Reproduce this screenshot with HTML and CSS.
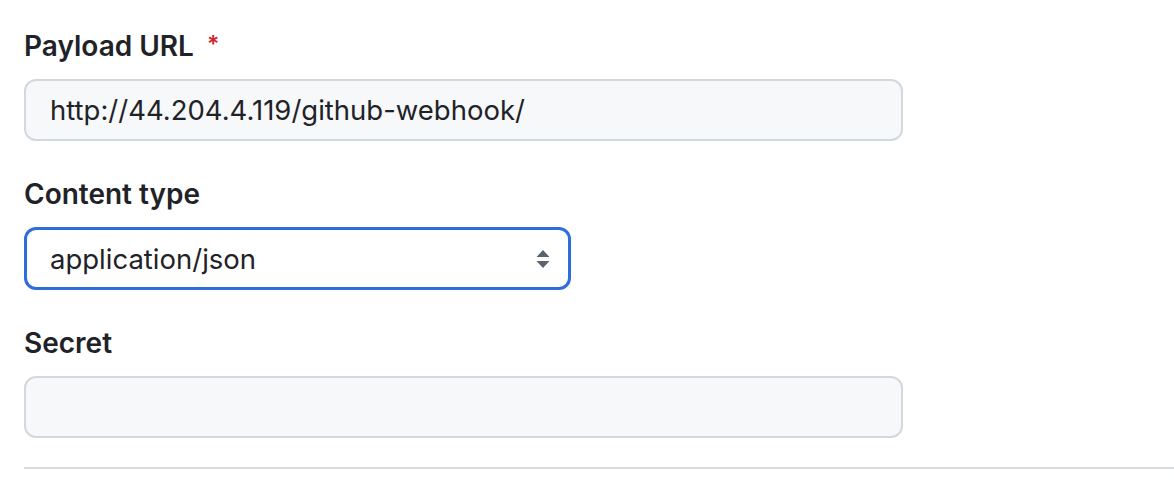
FILE: index.html
```html
<!DOCTYPE html>
<html>
<head>
<meta charset="utf-8">
<link rel="stylesheet" href="styles.css">
</head>
<body>
<form class="form">
  <div class="group">
    <label class="label">Payload URL <span class="req">*</span></label>
    <div class="input wide">http://44.204.4.119/github-webhook/</div>
  </div>
  <div class="group">
    <label class="label">Content type</label>
    <div class="select">
      <span>application/json</span>
      <svg class="arrows" width="14" height="20" viewBox="0 0 14 20"><path d="M7 1 L13.5 8 H0.5 Z M7 19 L13.5 12 H0.5 Z" fill="#59636e"/></svg>
    </div>
  </div>
  <div class="group">
    <label class="label">Secret</label>
    <div class="input wide"></div>
  </div>
  <hr class="rule">
</form>
</body>
</html>
```
FILE: styles.css
```css
html, body {
  margin: 0;
  padding: 0;
  background: #ffffff;
}
body {
  font-family: Inter, "Noto Sans", "Liberation Sans", sans-serif;
  color: #1f2328;
}
.form {
  padding: 26px 0 0 24px;
}
.group {
  display: flex;
  flex-direction: column;
  align-items: flex-start;
  margin-bottom: 35px;
}
.label {
  font-size: 28px;
  font-weight: 600;
  line-height: 36px;
  margin-bottom: 15px;
  display: block;
}
.req {
  color: #d1242f;
  font-size: 23px;
  margin-left: 6px;
  vertical-align: 4px;
}
.input {
  box-sizing: border-box;
  height: 62px;
  background: #f6f8fa;
  border: 2px solid #d1d9e0;
  border-radius: 12px;
  padding: 0 24px;
  font-size: 27.5px;
  display: flex;
  align-items: center;
}
.wide {
  width: 879px;
}
.select {
  box-sizing: border-box;
  width: 547px;
  height: 63px;
  border: 3px solid #2d6ed8;
  border-radius: 12px;
  background: #ffffff;
  padding: 0 18px 0 23px;
  font-size: 27.5px;
  display: flex;
  align-items: center;
  justify-content: space-between;
}
.arrows {
  display: block;
}
.rule {
  margin: -6px 0 0 0;
  border: 0;
  height: 2px;
  background: #d8dee4;
}
```
